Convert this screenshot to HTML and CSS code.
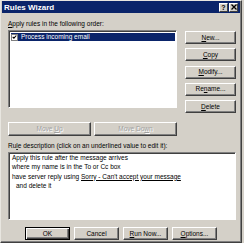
FILE: index.html
```html
<!DOCTYPE html>
<html lang="en">
<head>
  <meta charset="UTF-8" />
  <title>Rules Wizard</title>
  <link rel="stylesheet" href="styles.css">
</head>
<body>

<div class="window">
  <div class="titlebar">
    <span class="title">Rules Wizard</span>
    <div class="title-btns">
      <span class="cap-btn">?</span>
      <span class="cap-btn">
        <svg width="6" height="6" viewBox="0 0 6 6"><path d="M0.5 0.5 L5.5 5.5 M5.5 0.5 L0.5 5.5" stroke="#000" stroke-width="1.3"/></svg>
      </span>
    </div>
  </div>

  <div class="content">
    <div class="label"><u>A</u>pply rules in the following order:</div>

    <div class="rules-row">
      <div class="listbox">
        <div class="rule selected">
          <span class="check">
            <svg width="6" height="6" viewBox="0 0 6 6"><path d="M0.8 2.8 L2.3 4.4 L5.2 1.2" stroke="#000" stroke-width="1.3" fill="none"/></svg>
          </span>
          Process incoming email
        </div>
      </div>
      <div class="side-btns">
        <button class="btn"><u>N</u>ew...</button>
        <button class="btn"><u>C</u>opy</button>
        <button class="btn"><u>M</u>odify...</button>
        <button class="btn">Re<u>n</u>ame...</button>
        <button class="btn"><u>D</u>elete</button>
      </div>
    </div>

    <div class="order-row">
      <button class="btn disabled">Move <u>U</u>p</button>
      <button class="btn disabled">Move Do<u>w</u>n</button>
    </div>

    <div class="label">Ru<u>l</u>e description (click on an underlined value to edit it):</div>
    <div class="desc">
      <div>Apply this rule after the message arrives</div>
      <div>where my name is in the To or Cc box</div>
      <div>have server reply using <span class="link">Sorry - Can't accept your message</span></div>
      <div class="indent">and delete it</div>
    </div>

    <div class="footer">
      <button class="btn default">OK</button>
      <button class="btn">Cancel</button>
      <button class="btn"><u>R</u>un Now...</button>
      <button class="btn"><u>O</u>ptions...</button>
    </div>
  </div>
</div>

</body>
</html>
```

FILE: styles.css
```css
* {
  box-sizing: border-box;
}

body {
  margin: 0;
  background: #d4d0c8;
  font-family: "Liberation Sans", Arial, sans-serif;
  font-size: 6.5px;
  color: #000;
}

.window {
  width: 242px;
  height: 243px;
  background: #d4d0c8;
  border: 1px solid;
  border-color: #e8e6e0 #404040 #404040 #e8e6e0;
  box-shadow: inset -1px -1px #808080;
  display: flex;
  flex-direction: column;
}

.titlebar {
  height: 12px;
  margin: 0 1px;
  background: #0a246a;
  color: #fff;
  display: flex;
  align-items: center;
  justify-content: space-between;
  padding: 0 2px 0 2px;
}

.title {
  font-weight: bold;
  font-size: 8px;
}

.title-btns {
  display: flex;
  gap: 1px;
}

.cap-btn {
  width: 9px;
  height: 9px;
  background: #d4d0c8;
  color: #000;
  font-weight: bold;
  font-size: 7px;
  line-height: 9px;
  text-align: center;
  display: flex;
  align-items: center;
  justify-content: center;
  border: 1px solid;
  border-color: #fff #404040 #404040 #fff;
}

.content {
  padding: 7px 5px 0 7px;
  display: flex;
  flex-direction: column;
}

.label {
  height: 8px;
  line-height: 8px;
}

.rules-row {
  display: flex;
  gap: 8px;
  margin-top: 2px;
}

.listbox {
  width: 169px;
  height: 78px;
  background: #fff;
  border: 1px solid;
  border-color: #808080 #fff #fff #808080;
  box-shadow: inset 1px 1px #404040;
  padding: 2px 1px 0 2px;
}

.rule {
  height: 8px;
  display: flex;
  align-items: center;
  gap: 3px;
  color: #fff;
  line-height: 8px;
}

.rule.selected {
  background: #0a246a;
}

.check {
  width: 7px;
  height: 7px;
  background: #fff;
  border: 1px solid #808080;
  display: flex;
  align-items: center;
  justify-content: center;
}

.side-btns {
  display: flex;
  flex-direction: column;
  gap: 4.25px;
  padding-top: 1px;
}

.btn {
  font-family: inherit;
  font-size: inherit;
  color: #000;
  background: #d4d0c8;
  border: 1px solid;
  border-color: #fff #404040 #404040 #fff;
  box-shadow: inset -1px -1px #808080;
  padding: 0;
  margin: 0;
  height: 13px;
  line-height: 10px;
}

.side-btns .btn {
  width: 51px;
}

.order-row {
  display: flex;
  gap: 3px;
  margin-top: 9px;
}

.order-row .btn {
  width: 83px;
  height: 14px;
}

.btn.disabled {
  color: #a0a0a0;
  text-shadow: 1px 1px #fff;
}

.order-row + .label {
  margin-top: 6px;
}

.desc {
  margin-top: 2px;
  width: 228px;
  height: 68px;
  background: #fff;
  border: 1px solid;
  border-color: #808080 #fff #fff #808080;
  box-shadow: inset 1px 1px #404040;
  padding: 0 3px;
  line-height: 9.3px;
}

.link {
  text-decoration: underline;
}

.indent {
  padding-left: 4px;
}

.footer {
  display: flex;
  gap: 4px;
  margin-top: 7px;
  padding-left: 17px;
}

.footer .btn {
  width: 45px;
}

.btn.default {
  border-color: #000;
  box-shadow: inset 1px 1px #fff, inset -1px -1px #404040, inset -2px -2px #808080;
}
```
